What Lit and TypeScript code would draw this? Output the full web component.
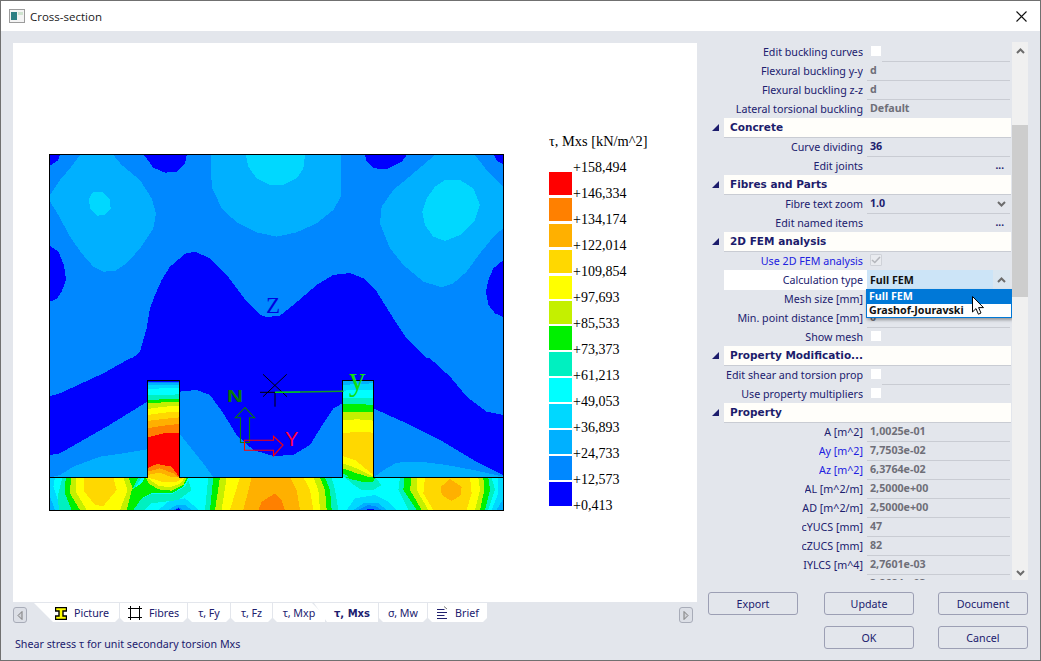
import { LitElement, html, css, svg } from "lit";
import { customElement } from "lit/decorators.js";
import { classMap } from "lit/directives/class-map.js";

type Shape = [string, string];

interface GridRow {
  kind: "head" | "text" | "check" | "dots" | "combo" | "open";
  label: string;
  value?: string;
  tone?: "muted" | "dark";
  blue?: boolean;
  disabled?: boolean;
}

const C = {
  blue: "#0000ff",
  mid: "#0088ff",
  sky: "#00b0ff",
  pale: "#00d8ff",
  cyan: "#00ffff",
  teal: "#00f0c0",
  green: "#00f000",
  lime: "#c4f000",
  yellow: "#ffff00",
  gold: "#ffd800",
  amber: "#ffb000",
  orange: "#ff8000",
  red: "#ff0000",
};

// top flange contours, coordinates are 3x from (40,145)
const upperShapes: Shape[] = [
  [C.blue, "30,30 60,30 55,45 30,62"],
  [C.blue, "312,30 440,30 435,55 410,80 375,83 340,68"],
  [C.blue, "975,30 1100,30 1085,50 1040,72 1000,70 980,50"],
  [C.blue, "1362,30 1390,30 1390,58 1372,48"],
  [C.blue, "30,303 55,320 72,360 78,405 65,440 50,462 30,470"],
  [C.blue, "1390,345 1360,370 1345,405 1338,440 1345,480 1365,505 1390,516"],
  [C.sky, "120,30 220,30 245,60 300,105 335,160 348,205 340,250 300,310 260,355 225,378 190,380 160,365 125,325 90,275 55,210 30,170 30,150 60,105 90,70"],
  [C.pale, "160,140 190,142 210,165 212,190 195,210 170,212 150,190 147,160"],
  [C.sky, "513,30 903,30 903,155 880,195 830,235 770,262 710,275 650,262 590,232 545,190 515,125"],
  [C.pale, "618,30 795,30 790,70 770,100 730,120 690,120 650,100 625,65"],
  [C.sky, "1185,30 1305,30 1340,75 1390,125 1390,250 1365,270 1320,325 1280,380 1240,415 1205,427 1150,410 1090,360 1050,310 1020,235 1025,185 1060,135 1120,85"],
  [C.pale, "1215,105 1260,105 1300,130 1320,180 1305,225 1265,268 1215,288 1180,275 1155,240 1147,200 1160,160 1185,125"],
  [C.blue, "190,692 260,655 300,620 320,550 330,490 345,450 365,405 390,365 440,323 470,322 510,340 560,390 620,470 660,510 680,516 720,512 760,480 830,420 880,390 930,384 970,400 1010,440 1060,520 1100,580 1160,640 1220,692"],
];

// lower part of the flange and the ribs, 3x from (40,360)
const lowerShapes: Shape[] = [
  [C.blue, "270,-5 190,40 60,100 30,108 30,285 60,280 200,200 322,125 418,95 470,90 510,105 550,160 590,225 640,270 700,288 760,285 810,255 850,190 880,145 908,130 1000,145 1100,190 1200,240 1300,300 1390,345 1390,165 1340,155 1280,110 1230,50 1170,-5"],
  [C.sky, "30,352 60,345 100,320 180,290 250,280 322,268 322,352"],
  [C.sky, "418,220 450,260 490,310 520,352 418,352"],
  [C.sky, "1000,352 1040,325 1070,308 1140,305 1220,315 1300,330 1390,350 1390,352"],
];

const ribBands = (x0: number, x1: number, bands: [string, number, number, number][]): Shape[] =>
  bands.map(([c, a, b, d]) => [
    c,
    `${x0},${a} ${(x0 + x1) / 2},${b} ${x1},${d} ${x1},352 ${x0},352`,
  ]);

const ribShapes: Shape[] = [
  ...ribBands(322, 418, [
    [C.blue, 62, 62, 62],
    [C.mid, 65, 65, 65],
    [C.sky, 68, 68, 68],
    [C.pale, 75, 75, 75],
    [C.cyan, 87, 85, 85],
    [C.teal, 105, 105, 103],
    [C.green, 120, 118, 117],
    [C.lime, 130, 127, 125],
    [C.yellow, 147, 140, 138],
    [C.gold, 165, 158, 155],
    [C.amber, 183, 177, 172],
    [C.orange, 205, 197, 192],
    [C.red, 232, 220, 218],
  ]),
  [C.orange, "322,325 350,312 395,320 418,352 322,352"],
  [C.amber, "322,335 360,325 400,340 412,352 322,352"],
  [C.gold, "322,345 360,338 395,352 322,352"],
  ...ribBands(908, 1000, [
    [C.sky, 62, 62, 62],
    [C.pale, 75, 72, 70],
    [C.cyan, 92, 90, 90],
    [C.teal, 115, 113, 115],
    [C.green, 133, 132, 135],
    [C.lime, 155, 155, 157],
    [C.yellow, 180, 178, 182],
    [C.gold, 220, 215, 218],
  ]),
  [C.yellow, "908,288 945,300 1000,345 1000,352 908,352"],
  [C.lime, "908,310 950,325 1000,350 1000,352 908,352"],
  [C.green, "908,325 950,340 990,352 908,352"],
  [C.teal, "908,340 930,352 908,352"],
];

// bottom strip, 3x from (45,470)
const stripShapes: Shape[] = [
  [C.pale, "15,22 30,22 25,50 35,80 50,120 15,120"],
  [C.sky, "15,80 30,120 15,120"],
  [C.teal, "52,22 290,22 265,60 230,120 42,120 38,80 45,50"],
  [C.green, "62,22 280,22 262,60 245,120 80,120 60,70"],
  [C.lime, "78,22 250,22 265,60 245,120 105,120 75,70"],
  [C.yellow, "92,22 235,22 248,60 225,120 125,120 92,65"],
  [C.gold, "118,22 205,22 215,60 175,108 150,105 118,65"],
  [C.teal, "265,120 290,85 320,72 380,72 420,50 430,30 440,60 400,90 320,100 300,120"],
  [C.green, "260,60 290,40 300,22 430,22 415,50 380,70 320,70 290,85 265,120 245,120"],
  [C.lime, "303,22 425,22 415,45 380,62 340,58 310,40"],
  [C.yellow, "305,22 420,22 405,42 375,52 340,47"],
  [C.gold, "308,22 416,22 395,35 350,35"],
  [C.pale, "340,120 370,95 420,85 450,110 460,120"],
  [C.sky, "370,120 395,105 420,105 440,120"],
  [C.mid, "385,120 400,112 415,120"],
  [C.blue, "392,120 408,120 400,115"],
  [C.teal, "490,22 860,22 870,60 880,120 480,120"],
  [C.green, "505,22 840,22 855,60 860,120 495,120"],
  [C.lime, "525,22 825,22 840,60 845,120 510,120"],
  [C.yellow, "545,22 805,22 820,60 825,120 530,120"],
  [C.gold, "585,22 775,22 795,60 805,120 555,120"],
  [C.amber, "620,22 735,22 755,60 765,120 595,120"],
  [C.orange, "640,120 650,95 690,70 710,90 720,120"],
  [C.teal, "900,22 990,22 1010,45 985,60 950,60 920,40"],
  [C.green, "900,22 990,22 985,35 950,35 920,28"],
  [C.pale, "905,120 930,85 990,75 1030,95 1055,120"],
  [C.sky, "925,120 955,100 1000,100 1025,120"],
  [C.mid, "940,120 970,105 995,110 1010,120"],
  [C.blue, "960,120 990,120 980,116"],
  [C.pale, "1360,22 1375,22 1375,120 1340,120 1360,70"],
  [C.sky, "1375,85 1375,120 1355,120"],
  [C.teal, "1065,22 1340,22 1350,60 1330,120 1090,120 1060,60"],
  [C.green, "1078,22 1330,22 1335,60 1320,120 1115,120 1075,60"],
  [C.lime, "1100,22 1315,22 1318,60 1305,120 1130,120 1095,60"],
  [C.yellow, "1115,22 1300,22 1305,60 1290,120 1150,120 1115,60"],
  [C.gold, "1140,22 1275,22 1280,70 1265,120 1165,120 1135,70"],
  [C.amber, "1215,27 1250,50 1248,75 1220,93 1190,75 1188,50"],
];

const legend: [string, number, number][] = [
  [C.red, 172, 23],
  [C.orange, 198, 23],
  [C.amber, 224, 23],
  [C.gold, 250, 23],
  [C.yellow, 276, 23],
  ["#c4f000", 301, 23],
  [C.green, 326, 24],
  [C.teal, 352, 24],
  [C.cyan, 378, 24],
  [C.pale, 404, 24],
  [C.sky, 430, 24],
  [C.mid, 456, 24],
  [C.blue, 482, 24],
];

const legendValues = [
  "+158,494", "+146,334", "+134,174", "+122,014", "+109,854", "+97,693", "+85,533",
  "+73,373", "+61,213", "+49,053", "+36,893", "+24,733", "+12,573", "+0,413",
];

const rows: GridRow[] = [
  { kind: "check", label: "Edit buckling curves" },
  { kind: "text", label: "Flexural buckling y-y", value: "d", tone: "muted" },
  { kind: "text", label: "Flexural buckling z-z", value: "d", tone: "muted" },
  { kind: "text", label: "Lateral torsional buckling", value: "Default", tone: "muted" },
  { kind: "head", label: "Concrete" },
  { kind: "text", label: "Curve dividing", value: "36", tone: "dark" },
  { kind: "dots", label: "Edit joints" },
  { kind: "head", label: "Fibres and Parts" },
  { kind: "combo", label: "Fibre text zoom", value: "1.0", tone: "dark" },
  { kind: "dots", label: "Edit named items" },
  { kind: "head", label: "2D FEM analysis" },
  { kind: "check", label: "Use 2D FEM analysis", blue: true, disabled: true },
  { kind: "open", label: "Calculation type", value: "Full FEM" },
  { kind: "text", label: "Mesh size [mm]", value: "" },
  { kind: "text", label: "Min. point distance [mm]", value: "0", tone: "muted" },
  { kind: "check", label: "Show mesh" },
  { kind: "head", label: "Property Modificatio..." },
  { kind: "check", label: "Edit shear and torsion properties" },
  { kind: "check", label: "Use property multipliers" },
  { kind: "head", label: "Property" },
  { kind: "text", label: "A [m^2]", value: "1,0025e-01", tone: "muted" },
  { kind: "text", label: "Ay [m^2]", value: "7,7503e-02", tone: "muted", blue: true },
  { kind: "text", label: "Az [m^2]", value: "6,3764e-02", tone: "muted", blue: true },
  { kind: "text", label: "AL [m^2/m]", value: "2,5000e+00", tone: "muted" },
  { kind: "text", label: "AD [m^2/m]", value: "2,5000e+00", tone: "muted" },
  { kind: "text", label: "cYUCS [mm]", value: "47", tone: "muted" },
  { kind: "text", label: "cZUCS [mm]", value: "82", tone: "muted" },
  { kind: "text", label: "IYLCS [m^4]", value: "2,7601e-03", tone: "muted" },
  { kind: "text", label: "IZLCS [m^4]", value: "3,8684e-03", tone: "muted" },
];

const tabs = [
  { label: "Picture", width: 85, icon: "beam" },
  { label: "Fibres", width: 67, icon: "fibres" },
  { label: "τ, Fy", width: 42 },
  { label: "τ, Fz", width: 41 },
  { label: "τ, Mxp", width: 52, cut: true },
  { label: "τ, Mxs", width: 52, active: true },
  { label: "σ, Mw", width: 48 },
  { label: "Brief", width: 59, icon: "brief" },
];

const chevron = (up: boolean) => html`<svg class="chev" viewBox="0 0 9 6">
  <path d=${up ? "M1 5L4.5 1.5L8 5" : "M1 1L4.5 4.5L8 1"} fill="none" stroke="#6c6c6c" stroke-width="2"></path>
</svg>`;

const polys = (shapes: Shape[]) =>
  shapes.map(([c, p]) => svg`<polygon fill=${c} points=${p}></polygon>`);

@customElement("app-root")
export class AppRoot extends LitElement {
  static styles = css`
    :host {
      display: block;
      width: 1041px;
      height: 661px;
      font-family: "Noto Sans", "Liberation Sans", sans-serif;
      font-size: 10.7px;
      color: #20206e;
    }
    .window {
      box-sizing: border-box;
      width: 100%;
      height: 100%;
      display: flex;
      flex-direction: column;
      border: 1px solid #707070;
      background: #e3e6ec;
    }
    .title {
      height: 30px;
      flex: none;
      background: #fff;
      display: flex;
      align-items: center;
      padding: 0 13px 0 8px;
      gap: 5px;
      font-family: "Open Sans", sans-serif;
      font-size: 11.5px;
      color: #1a1a1a;
    }
    .title .close {
      margin-left: auto;
    }
    .body {
      flex: 1;
      display: flex;
      min-height: 0;
    }
    .left {
      width: 696px;
      flex: none;
      padding: 12px 0 0 12px;
      box-sizing: border-box;
      display: flex;
      flex-direction: column;
    }
    .canvas {
      height: 559px;
      flex: none;
      background: #fff;
    }
    .canvas svg {
      display: block;
    }
    .tabbar {
      height: 20px;
      margin-top: 1px;
      flex: none;
      display: flex;
      align-items: flex-start;
    }
    .nav {
      width: 12px;
      height: 14px;
      margin-top: 4px;
      border: 1px solid #a8acb8;
      border-radius: 3px;
      background: #dcdfe6;
      display: flex;
      align-items: center;
      justify-content: center;
    }
    .nav.prev {
      margin-right: 7px;
    }
    .nav.next {
      margin-left: auto;
      margin-right: 4px;
    }
    .tabs {
      display: flex;
      gap: 1px;
    }
    .tab {
      box-sizing: border-box;
      height: 19px;
      padding-top: 1px;
      background: #fff;
      display: flex;
      align-items: center;
      justify-content: center;
      gap: 7px;
      clip-path: polygon(0 0, 100% 0, 100% 15px, calc(100% - 4px) 100%, 4px 100%, 0 15px);
      white-space: nowrap;
    }
    .tab.first {
      justify-content: flex-start;
      padding-left: 21px;
      clip-path: polygon(0 0, 100% 0, 100% 15px, calc(100% - 4px) 100%, 19px 100%);
    }
    .tab.cut {
      clip-path: polygon(0 0, calc(100% - 13px) 0, 100% 13px, 100% 100%, 4px 100%, 0 15px);
    }
    .tab.active {
      margin-left: -12px;
      width: 64px;
      padding-left: 12px;
      font-weight: 700;
      font-family: "DejaVu Sans", sans-serif;
      font-size: 10px;
      clip-path: polygon(0 0, 100% 0, 100% 100%, 13px 100%);
    }
    .status {
      padding: 14px 0 0 2px;
    }
    .right {
      flex: 1;
      padding: 11px 12px 0 9px;
      display: flex;
      flex-direction: column;
    }
    .props {
      height: 538px;
      flex: none;
      display: flex;
    }
    .grid {
      width: 306px;
      height: 538px;
      overflow: hidden;
    }
    .row {
      display: grid;
      grid-template-columns: 18px 143px 143px;
      height: 19px;
    }
    .gutter {
      display: flex;
      align-items: center;
      justify-content: center;
      padding-bottom: 2px;
    }
    .label {
      box-sizing: border-box;
      line-height: 20px;
      padding-left: 2px;
      display: flex;
      justify-content: flex-end;
      min-width: 0;
    }
    .label span {
      margin-right: 4px;
      min-width: 0;
      white-space: nowrap;
      overflow: hidden;
    }
    .label.blue {
      color: #2020e0;
    }
    .value {
      box-sizing: border-box;
      border-bottom: 1px solid #c9ccd3;
      padding-left: 3px;
      line-height: 17px;
      font-weight: 700;
      display: flex;
      align-items: center;
      justify-content: space-between;
    }
    .value.muted {
      color: #6f6f78;
    }
    .value.dark {
      color: #20206e;
    }
    .value.check {
      border-bottom: 0;
      padding: 0;
      align-items: stretch;
    }
    .value .box {
      box-sizing: border-box;
      width: 12px;
      height: 12px;
      margin: 3px 0 0 3px;
      flex: none;
      background: #fff;
      border: 1px solid #e3e6ec;
      border-radius: 1px;
      display: flex;
      align-items: center;
      justify-content: center;
    }
    .value .box.off {
      background: #e9ebef;
      border-color: #cfd2d8;
    }
    .value .line {
      flex: 1;
      border-bottom: 1px solid #c9ccd3;
    }
    .value .dots {
      margin: 0 6px 0 auto;
      font-size: 10px;
      line-height: 17px;
      color: #20206e;
    }
    .chev {
      width: 9px;
      height: 6px;
      margin-right: 4px;
    }
    .row.head {
      grid-template-columns: 18px 1fr;
    }
    .row.head .band {
      box-sizing: border-box;
      width: 287px;
      background: #fffefa;
      border-bottom: 1px solid #c9ccd3;
      padding-left: 6px;
      font-family: "DejaVu Sans", sans-serif;
      font-size: 10.5px;
      font-weight: 700;
      line-height: 19px;
      color: #1c1c6c;
    }
    .row.open .label {
      background: #fff;
    }
    .row.open .value {
      position: relative;
      background: #cce4f7;
      color: #111;
      border-bottom: 0;
      padding-right: 0;
    }
    .row.open .arrow {
      align-self: stretch;
      width: 17px;
      background: #dae6f0;
      display: flex;
      align-items: center;
      justify-content: center;
    }
    .row.open .chev {
      margin: 0;
    }
    .menu {
      position: absolute;
      z-index: 2;
      left: -1px;
      top: 19px;
      width: 146px;
      box-sizing: border-box;
      border: 1px solid #0078d7;
      background: #fff;
      box-shadow: 1px 2px 3px rgba(0, 0, 0, 0.35);
      color: #111;
      font-weight: 700;
      line-height: 13px;
    }
    .menu div {
      height: 13px;
      padding-left: 2px;
    }
    .menu .sel {
      background: #0078d7;
      color: #fff;
      height: 14px;
    }
    .pointer {
      position: absolute;
      left: 105px;
      top: 6px;
      width: 12px;
      height: 19px;
    }
    .scroll {
      width: 16px;
      flex: none;
      background: #f0f0f0;
      display: flex;
      flex-direction: column;
      align-items: center;
    }
    .scroll .chev {
      margin: 6px 0 0;
      flex: none;
    }
    .scroll .thumb {
      width: 16px;
      height: 172px;
      margin-top: 71px;
      background: #cdcdcd;
    }
    .scroll .down {
      margin: auto 0 4px;
    }
    .actions {
      display: flex;
      flex-direction: column;
      gap: 11px;
      margin-top: 12px;
    }
    .btnrow {
      display: flex;
      gap: 24px;
      margin-left: 2px;
    }
    .btnrow.end {
      justify-content: flex-end;
    }
    .btnrow .gap {
      margin-right: 2px;
    }
    .btn {
      box-sizing: border-box;
      width: 90px;
      height: 23px;
      border: 1px solid #9c9fb4;
      border-radius: 3px;
      background: #e3e6ec;
      color: #20206e;
      font: inherit;
      padding: 0;
    }
  `;

  private tabIcon(name?: string) {
    if (name === "beam")
      return html`<svg width="12" height="13" viewBox="0 0 12 13">
        <path d="M.5 .5H11.5V4H8V9H11.5V12.5H.5V9H4V4H.5Z" fill="#ffff00" stroke="#000" stroke-width="1.4"></path>
      </svg>`;
    if (name === "fibres")
      return html`<svg width="14" height="14" viewBox="0 0 14 14">
        <path d="M0 2.5H14M0 11.5H14M2.5 0V14M11.5 0V14" stroke="#000" fill="none"></path>
      </svg>`;
    if (name === "brief")
      return html`<svg width="12" height="14" viewBox="0 0 12 14">
        <path d="M1 3.5H8.5M1 6.5H11M1 9.5H8.5M1 12.5H11" stroke="#20206e" fill="none"></path>
        <path d="M8 .5L11 3" stroke="#777" fill="none"></path>
      </svg>`;
    return "";
  }

  private renderValue(r: GridRow) {
    const tone = r.tone ?? "";
    switch (r.kind) {
      case "check":
        return html`<div class="value check">
          <span class="box ${r.disabled ? "off" : ""}">
            ${r.disabled
              ? html`<svg width="10" height="8" viewBox="0 0 10 8">
                  <path d="M1 4L3.8 6.5L9 1" fill="none" stroke="#b4b6bb" stroke-width="1.6"></path>
                </svg>`
              : ""}
          </span>
          <span class="line"></span>
        </div>`;
      case "dots":
        return html`<div class="value"><span class="dots">...</span></div>`;
      case "combo":
        return html`<div class="value ${tone}"><span>${r.value}</span>${chevron(false)}</div>`;
      case "open":
        return html`<div class="value">
          <span>${r.value}</span>
          <span class="arrow">${chevron(true)}</span>
          <div class="menu">
            <div class="sel">Full FEM</div>
            <div>Grashof-Jouravski</div>
            <svg class="pointer" viewBox="0 0 12 19">
              <path d="M.5 .5V16L4 12.6L6.4 18.2L9 17L6.6 11.6H11.5Z" fill="#fff" stroke="#000"></path>
            </svg>
          </div>
        </div>`;
      default:
        return html`<div class="value ${tone}"><span>${r.value}</span></div>`;
    }
  }

  private renderRow(r: GridRow) {
    if (r.kind === "head") {
      return html`<div class="row head">
        <div class="gutter">
          <svg width="7" height="7" viewBox="0 0 7 7"><path d="M7 0V7H0Z" fill="#1c1c6c"></path></svg>
        </div>
        <div class="band">${r.label}</div>
      </div>`;
    }
    return html`<div class=${classMap({ row: true, open: r.kind === "open" })}>
      <div></div>
      <div class=${classMap({ label: true, blue: !!r.blue })}>
        <span>${r.label}</span>
      </div>
      ${this.renderValue(r)}
    </div>`;
  }

  private renderDiagram() {
    return html`<svg width="684" height="559" viewBox="13 43 684 559" xmlns="http://www.w3.org/2000/svg">
      <defs>
        <clipPath id="flange"><rect x="50" y="155" width="453" height="322"></rect></clipPath>
        <clipPath id="strip"><rect x="50" y="477" width="453" height="33"></rect></clipPath>
      </defs>
      <g shape-rendering="crispEdges">
        <rect x="50" y="155" width="453" height="322" fill=${C.mid}></rect>
        <rect x="50" y="477" width="453" height="33" fill=${C.cyan}></rect>
        <g clip-path="url(#flange)">
          <g transform="translate(40 145) scale(.33333)">${polys(upperShapes)}</g>
          <g transform="translate(40 360) scale(.33333)">${polys(lowerShapes)}</g>
        </g>
        <g clip-path="url(#strip)">
          <g transform="translate(45 470) scale(.33333)">${polys(stripShapes)}</g>
        </g>
        <g transform="translate(40 360) scale(.33333)">${polys(ribShapes)}</g>
        <path
          d="M49.5 154.5H503.5V510.5H49.5ZM49.5 477.5H147.5V380.5H179.5V477.5H342.5V380.5H373.5V477.5H503.5"
          fill="none"
          stroke="#000"
          stroke-width="1.3"
        ></path>
      </g>
      <text x="266" y="313" font-family="Liberation Serif" font-size="23" fill="#0000e0">Z</text>
      <path d="M263 374.3L287 396.7M286.7 374.3L263 396.7M260 392.3H275M275 392.3V406.7" stroke="#000" fill="none"></path>
      <path d="M275 392.3L300 392" stroke="#00e000" stroke-width="1.4"></path>
      <path d="M300 392L343.5 391.3" stroke="#109a20" stroke-width="1.4"></path>
      <text x="349" y="390" font-family="Liberation Serif" font-size="33" fill="#10e010">y</text>
      <text x="227" y="402" font-family="Liberation Sans" font-size="16" font-weight="700" textLength="16" lengthAdjust="spacingAndGlyphs" fill="#0a7a0a">N</text>
      <path d="M240.5 442.5V417.7H235.3L245 407.5L254.7 417.7H249.5V442.5Z" fill="none" stroke="#0a7a0a" stroke-width="1.1"></path>
      <path d="M244.5 440.3H273.5V436.3L283 445L273.5 455.7V450.3H244.5Z" fill="none" stroke="#ff0000" stroke-width="1.1"></path>
      <text x="285" y="446" font-family="Liberation Sans" font-size="20" fill="#ff0040">Y</text>
      ${legend.map(([c, y, h]) => svg`<rect x="549" y=${y} width="23" height=${h} fill=${c}></rect>`)}
      <text x="549" y="146" font-family="Liberation Serif" font-size="14.4" fill="#000">τ, Mxs [kN/m^2]</text>
      ${legendValues.map(
        (v, i) => svg`<text x="573" y=${172 + i * 26} font-family="Liberation Serif" font-size="14" fill="#000">${v}</text>`
      )}
    </svg>`;
  }

  render() {
    return html`
      <div class="window">
        <div class="title">
          <svg width="16" height="14" viewBox="0 0 16 14">
            <rect x=".5" y=".5" width="15" height="13" fill="#f4f4f4" stroke="#9c9c9c"></rect>
            <rect x="2" y="3" width="6" height="8" fill="#2d7f83"></rect>
            <rect x="9" y="3" width="5" height="3" fill="#cfe3cf"></rect>
          </svg>
          <span>Cross-section</span>
          <svg class="close" width="11" height="11" viewBox="0 0 11 11">
            <path d="M.5 .5L10.5 10.5M10.5 .5L.5 10.5" stroke="#111" stroke-width="1.1"></path>
          </svg>
        </div>
        <div class="body">
          <div class="left">
            <div class="canvas">${this.renderDiagram()}</div>
            <div class="tabbar">
              <div class="nav prev">
                <svg width="6" height="9" viewBox="0 0 6 9"><path d="M5 .5V8.5L1 4.5Z" fill="#d0d2d8" stroke="#7c7c7c"></path></svg>
              </div>
              <div class="tabs">
                ${tabs.map(
                  (t, i) => html`<div
                    class=${classMap({ tab: true, first: i === 0, cut: !!t.cut, active: !!t.active })}
                    style=${t.active ? "" : `width: ${t.width}px`}
                  >
                    ${this.tabIcon(t.icon)}<span>${t.label}</span>
                  </div>`
                )}
              </div>
              <div class="nav next">
                <svg width="6" height="9" viewBox="0 0 6 9"><path d="M1 .5V8.5L5 4.5Z" fill="#d0d2d8" stroke="#7c7c7c"></path></svg>
              </div>
            </div>
            <div class="status">Shear stress τ for unit secondary torsion Mxs</div>
          </div>
          <div class="right">
            <div class="props">
              <div class="grid">${rows.map((r) => this.renderRow(r))}</div>
              <div class="scroll">
                ${chevron(true)}
                <div class="thumb"></div>
                <svg class="chev down" viewBox="0 0 9 6">
                  <path d="M1 1L4.5 4.5L8 1" fill="none" stroke="#6c6c6c" stroke-width="2"></path>
                </svg>
              </div>
            </div>
            <div class="actions">
              <div class="btnrow">
                <button class="btn gap">Export</button>
                <button class="btn">Update</button>
                <button class="btn">Document</button>
              </div>
              <div class="btnrow end">
                <button class="btn">OK</button>
                <button class="btn">Cancel</button>
              </div>
            </div>
          </div>
        </div>
      </div>
    `;
  }
}
